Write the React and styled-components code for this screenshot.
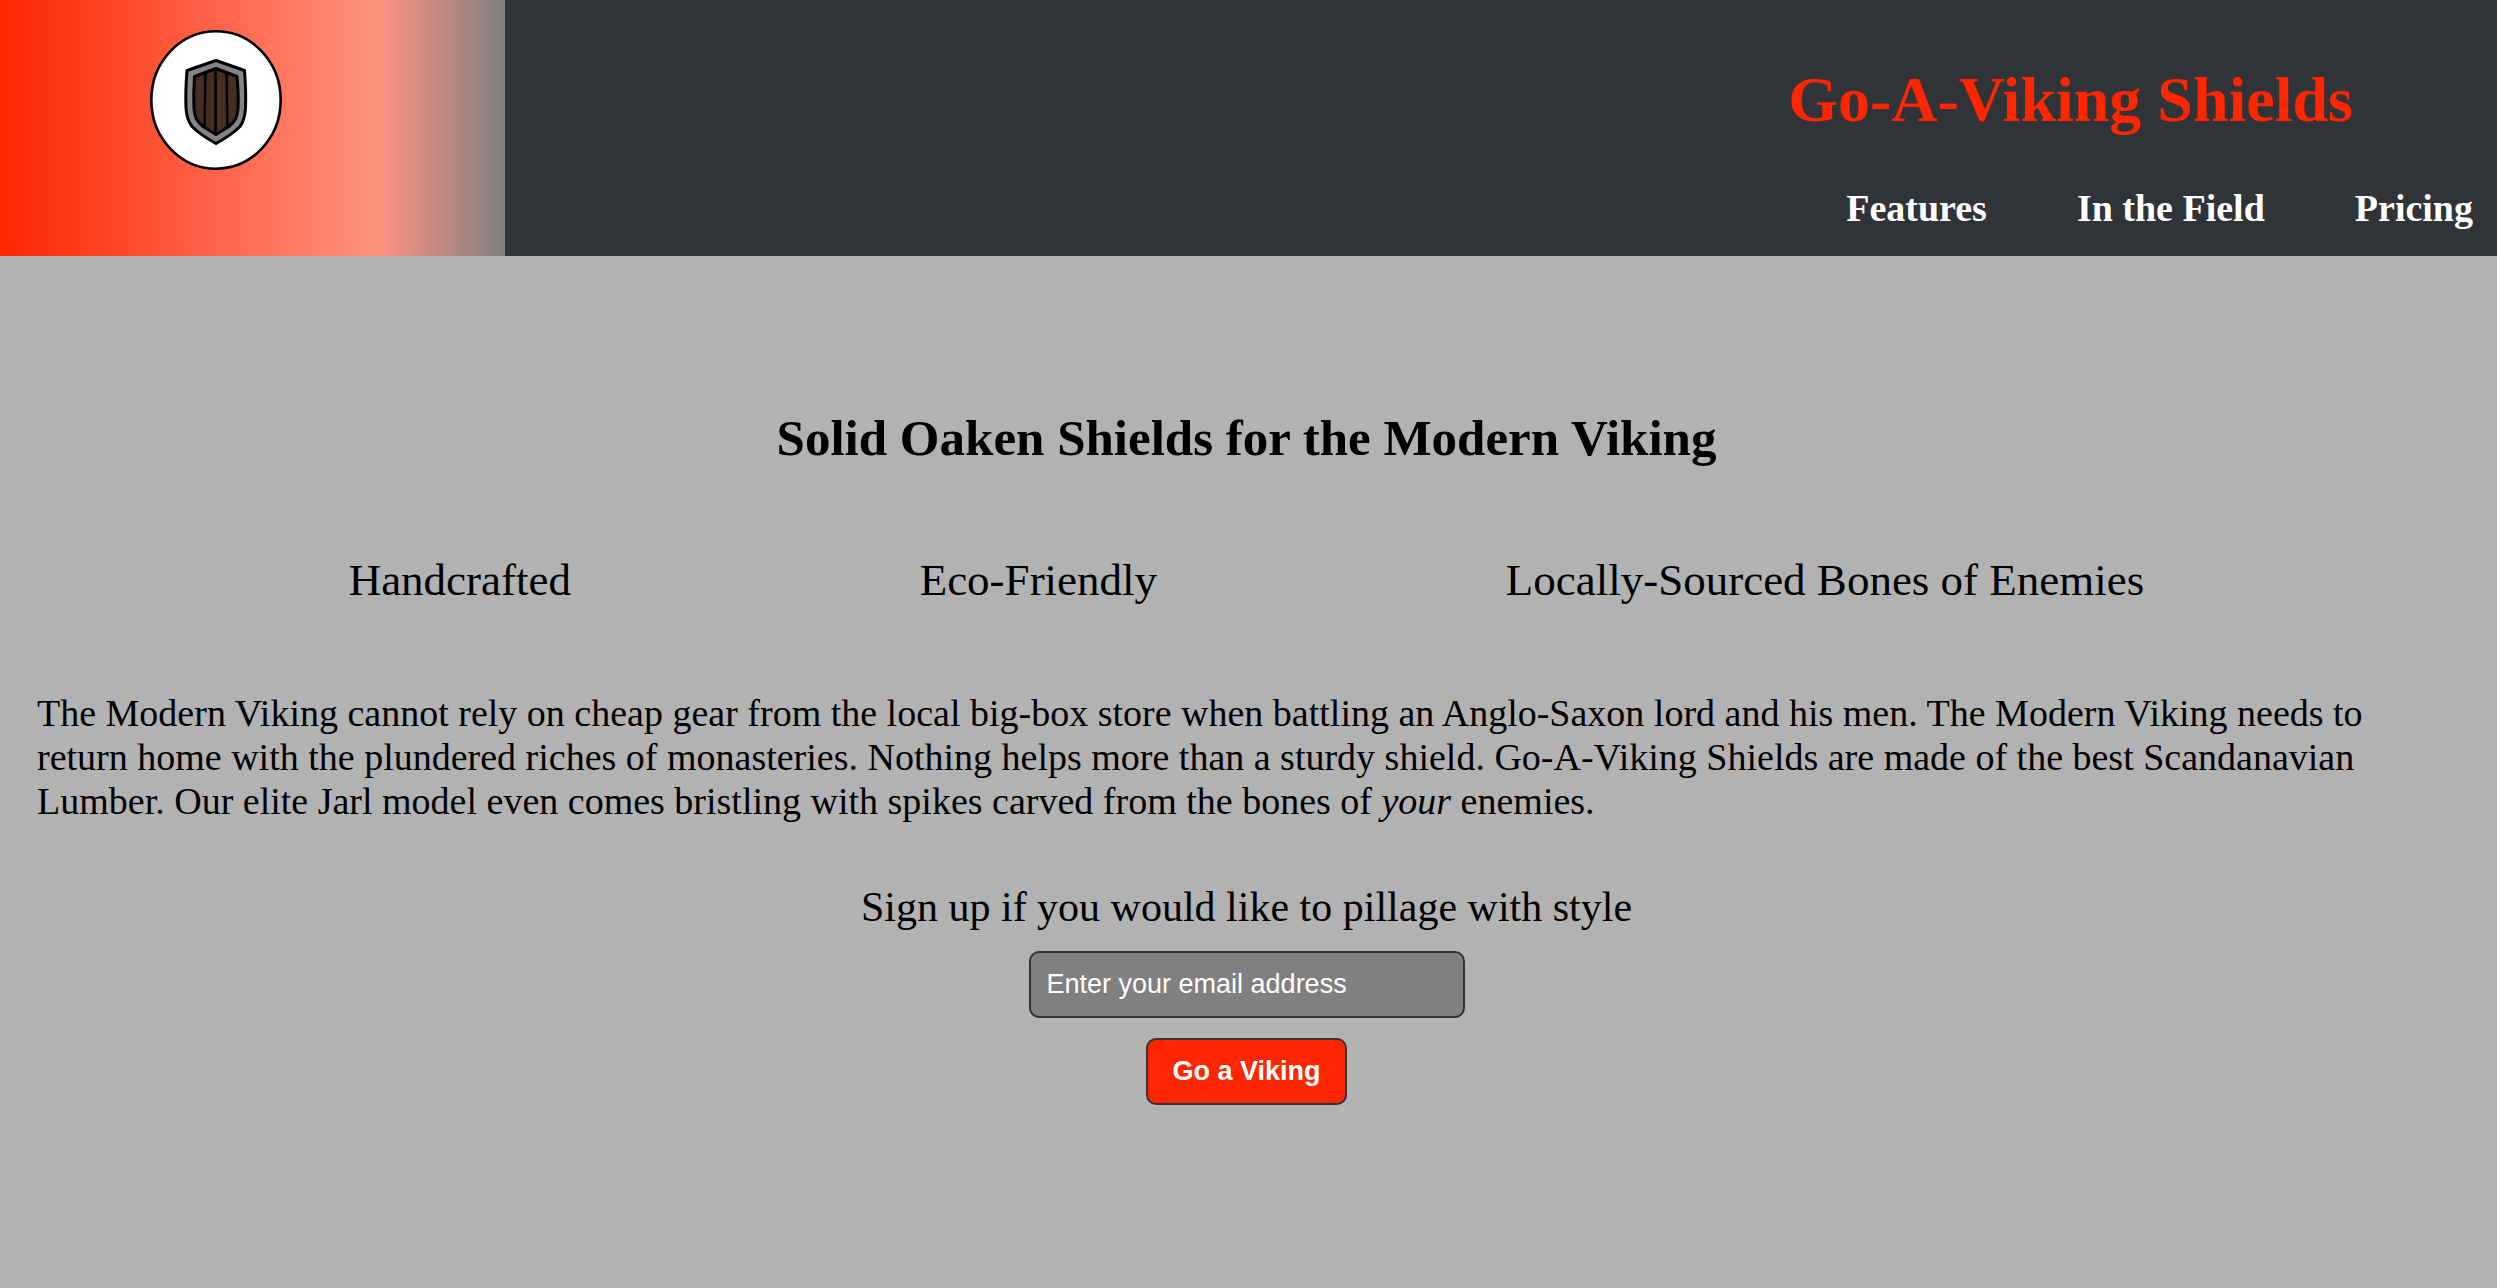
import React from "react";
import styled, { createGlobalStyle } from "styled-components";

const GlobalStyle = createGlobalStyle`
  *, *::before, *::after { box-sizing: border-box; }
  body {
    margin: 0;
    background: #b2b2b2;
    color: #000;
    font-family: "Liberation Serif", "Times New Roman", serif;
  }
  h1, h2, p, ul { margin: 0; padding: 0; }
  ul { list-style: none; }
`;

const Header = styled.header`
  display: flex;
  justify-content: space-between;
  background: #303338;
`;

const LogoPanel = styled.div`
  flex: 0 0 505px;
  padding: 30px 0 0 150px;
  background: linear-gradient(to right, #ff2600 0%, #ff9280 75%, #808080 100%);
`;

const Logo = styled.svg`
  display: block;
  width: 132px;
  height: 140px;
`;

const Masthead = styled.div`
  display: flex;
  flex-direction: column;
  align-items: flex-end;
  gap: 49px;
  padding: 63px 24px 26px 0;
`;

const Title = styled.h1`
  margin-right: 120px;
  color: #ff2600;
  font-size: 64px;
  line-height: 74px;
`;

const NavList = styled.ul`
  display: flex;
  gap: 90px;
`;

const NavLink = styled.a`
  color: #fff;
  font-size: 38px;
  font-weight: bold;
  line-height: 44px;
  text-decoration: none;
`;

const Main = styled.main`
  padding: 153px 4px 32px 0;
`;

const Tagline = styled.h2`
  font-size: 51px;
  line-height: 58px;
  text-align: center;
`;

const Features = styled.ul`
  display: flex;
  justify-content: space-evenly;
  margin-top: 87px;
`;

const Feature = styled.li`
  font-size: 45px;
  line-height: 52px;
`;

const Pitch = styled.p`
  margin-top: 85px;
  padding: 0 37px;
  font-size: 38px;
  line-height: 44px;
`;

const SignupForm = styled.form`
  display: flex;
  flex-direction: column;
  align-items: center;
  gap: 20px;
  margin-top: 60px;
`;

const SignupLabel = styled.label`
  font-size: 42px;
  line-height: 48px;
`;

const controlFont = `
  border: 2px solid #303338;
  border-radius: 10px;
  height: 67px;
  font-family: "Liberation Sans", Arial, sans-serif;
  font-size: 27px;
`;

const EmailInput = styled.input`
  ${controlFont}
  width: 436px;
  padding: 0 16px;
  background: #808080;
  color: #fff;
  &::placeholder { color: #fff; opacity: 1; }
`;

const SubmitButton = styled.button`
  ${controlFont}
  padding: 0 24px;
  background: #ff2600;
  color: #fff;
  font-weight: bold;
`;

function ShieldLogo() {
  return (
    <Logo viewBox="0 0 132 140" role="img" aria-label="Oaken shield">
      <ellipse cx="66" cy="70" rx="64.700" ry="68.700" fill="#fff" stroke="#000" strokeWidth="2.600" />
      <g stroke="#000" strokeLinejoin="round">
        <path
          d="M66 30.500 L94.500 40.500 C95.500 53 96 66 95.500 78 C95 86 93.500 92 90 96.500 C84 102.500 75 108.500 66 113.500 C57 108.500 48 102.500 42 96.500 C38.500 92 36.500 86 36 78 C35.500 66 36 53 37 40.500 Z"
          fill="#87838a"
          strokeWidth="3"
        />
        <path
          d="M66 38.500 L87 46.500 C88 57 88.500 68 88 79 C87.500 87 84.500 92.500 79 96.500 L66 104.500 L53 96.500 C47.500 92.500 44.500 87 44 79 C43.500 68 43.800 57 44.500 46.500 Z"
          fill="#442f22"
          strokeWidth="3"
        />
        <path d="M55.500 42.500 L54.500 97 M65.500 38.500 V104 M76.500 42.500 L77.500 97" fill="none" strokeWidth="2.600" />
      </g>
    </Logo>
  );
}

const navItems = [
  { href: "#features", text: "Features" },
  { href: "#field", text: "In the Field" },
  { href: "#pricing", text: "Pricing" },
];

const features = ["Handcrafted", "Eco-Friendly", "Locally-Sourced Bones of Enemies"];

export default function App() {
  return (
    <>
      <GlobalStyle />
      <Header>
        <LogoPanel>
          <ShieldLogo />
        </LogoPanel>
        <Masthead>
          <Title>Go-A-Viking Shields</Title>
          <nav>
            <NavList>
              {navItems.map((item) => (
                <li key={item.href}>
                  <NavLink href={item.href}>{item.text}</NavLink>
                </li>
              ))}
            </NavList>
          </nav>
        </Masthead>
      </Header>
      <Main>
        <Tagline>Solid Oaken Shields for the Modern Viking</Tagline>
        <Features id="features">
          {features.map((text) => (
            <Feature key={text}>{text}</Feature>
          ))}
        </Features>
        <Pitch id="field">
          The Modern Viking cannot rely on cheap gear from the local big-box store when battling an
          Anglo-Saxon lord and his men. The Modern Viking needs to return home with the plundered
          riches of monasteries. Nothing helps more than a sturdy shield. Go-A-Viking Shields are
          made of the best Scandanavian Lumber. Our elite Jarl model even comes bristling with
          spikes carved from the bones of <em>your</em> enemies.
        </Pitch>
        <SignupForm onSubmit={(event) => event.preventDefault()}>
          <SignupLabel htmlFor="email">Sign up if you would like to pillage with style</SignupLabel>
          <EmailInput id="email" type="email" name="email" placeholder="Enter your email address" />
          <SubmitButton type="submit">Go a Viking</SubmitButton>
        </SignupForm>
      </Main>
    </>
  );
}
